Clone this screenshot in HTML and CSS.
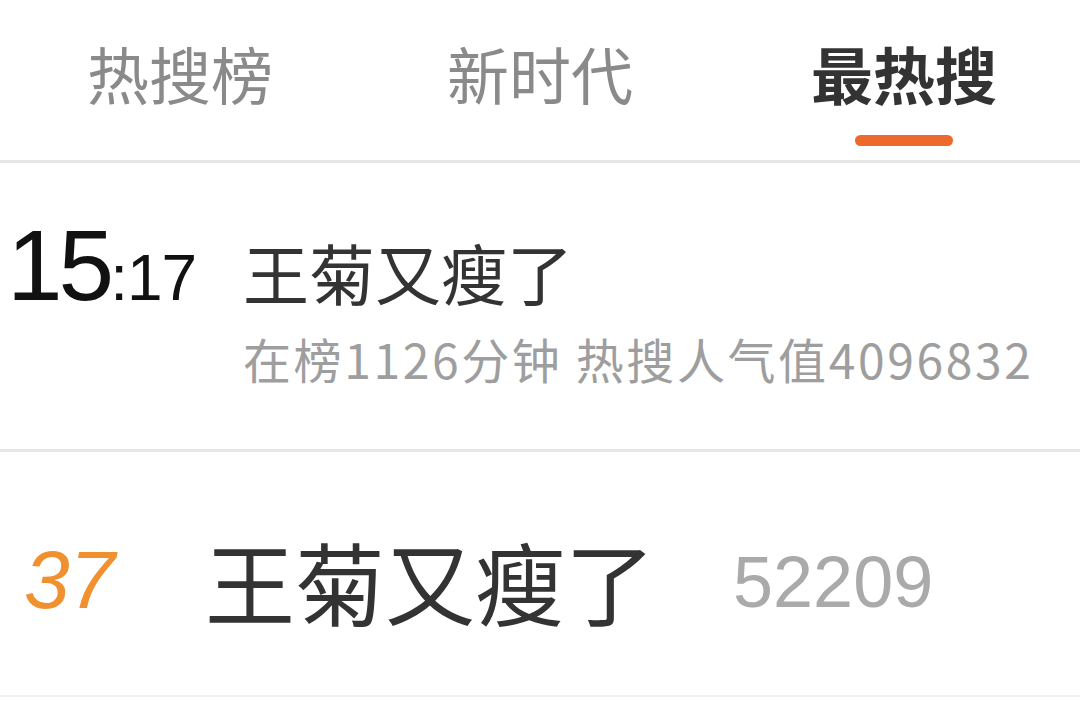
FILE: index.html
```html
<!DOCTYPE html>
<html lang="zh-CN">
<head>
    <meta charset="UTF-8">
    <meta name="viewport" content="width=device-width, initial-scale=1.0">
    <title>最热搜</title>
    <link rel="stylesheet" href="styles.css">
</head>
<body>

    <div class="tabs">
        <div class="tab">热搜榜</div>
        <div class="tab">新时代</div>
        <div class="tab active">最热搜<span class="underline"></span></div>
    </div>

    <div class="item">
        <div class="time"><span class="hh">15</span><span class="mm">:17</span></div>
        <div class="info">
            <div class="title">王菊又瘦了</div>
            <div class="meta">在榜1126分钟 热搜人气值4096832</div>
        </div>
    </div>

    <div class="rank-row">
        <div class="rank">37</div>
        <div class="rank-title">王菊又瘦了</div>
        <div class="rank-num">52209</div>
    </div>

</body>
</html>
```

FILE: styles.css
```css
body {
    margin: 0;
    padding: 0;
    background-color: #fff;
    font-family: "Noto Sans CJK SC", sans-serif;
    width: 1080px;
    overflow: hidden;
}
.tabs {
    display: grid;
    grid-template-columns: 1fr 1fr 1fr;
    height: 160px;
    border-bottom: 3px solid #e6e6e6;
}
.tab {
    display: flex;
    flex-direction: column;
    align-items: center;
    padding-top: 42px;
    font-size: 62px;
    line-height: 62px;
    color: #8a8a8a;
}
.tab.active {
    color: #333;
    font-weight: bold;
    padding-left: 8px;
}
.underline {
    display: block;
    width: 98px;
    height: 11px;
    margin-top: 31px;
    border-radius: 6px;
    background-color: #ec6a2c;
}
.item {
    display: flex;
    align-items: baseline;
    padding: 52px 0 67px 0;
    border-bottom: 3px solid #e6e6e6;
}
.time {
    width: 236px;
    padding-left: 7px;
    flex-shrink: 0;
    font-family: "Liberation Sans", sans-serif;
    color: #111;
    line-height: 1;
}
.hh {
    font-size: 100px;
    letter-spacing: -4px;
}
.mm {
    font-size: 64px;
    letter-spacing: -1px;
}
.title {
    font-size: 66px;
    line-height: 1;
    color: #333;
}
.meta {
    margin-top: 30px;
    font-size: 48px;
    line-height: 1;
    letter-spacing: 2.6px;
    color: #9e9e9e;
}
.rank-row {
    display: flex;
    align-items: center;
    height: 245px;
    padding-top: 12px;
    box-sizing: border-box;
    border-bottom: 2px solid #f0f0f0;
}
.rank {
    width: 180px;
    padding-left: 24px;
    box-sizing: border-box;
    font-family: "Liberation Sans", sans-serif;
    font-style: italic;
    font-size: 82px;
    line-height: 1;
    color: #f0902f;
}
.rank-title {
    margin-left: 25px;
    font-size: 90px;
    line-height: 1;
    color: #333;
}
.rank-num {
    margin-left: 78px;
    padding-top: 4px;
    font-family: "Liberation Sans", sans-serif;
    font-size: 72px;
    line-height: 1;
    color: #aaa;
}
```
